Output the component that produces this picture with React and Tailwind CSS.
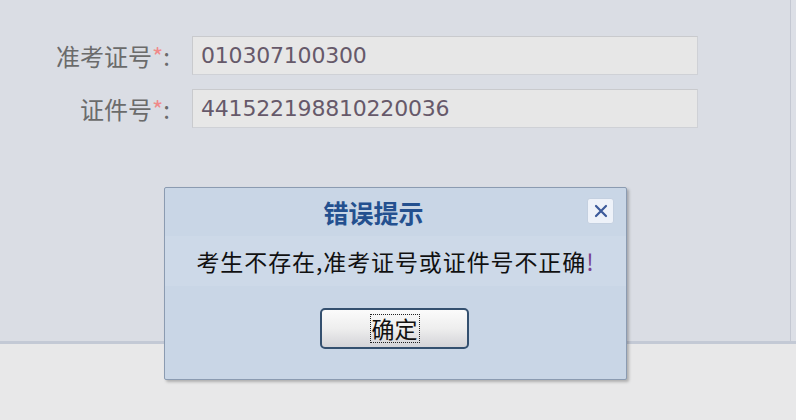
import React from "react";

const fields = [
  { label: "准考证号", value: "010307100300" },
  { label: "证件号", value: "441522198810220036" },
];

function FieldRow({ label, value }) {
  return (
    <div className="flex items-center h-[39px]">
      <div className="w-[176px] pr-[6px] text-right text-[24px] text-[#6b6b6b] leading-none whitespace-nowrap">
        {label}
        <span className="text-[#f08a8a]">*</span>:
      </div>
      <div className="ml-[16px] w-[506px] h-[39px] bg-[#e7e7e7] border-t border-l border-[#c9cacd] border-b border-r border-b-[#cfd1d6] border-r-[#cfd1d6] flex items-center pl-[8px]">
        <span className="text-[22px] text-[#66596a] font-['DejaVu_Sans',sans-serif] tracking-[-0.2px]">{value}</span>
      </div>
    </div>
  );
}

function ErrorDialog() {
  return (
    <div className="absolute left-[164px] top-[187px] w-[463px] h-[193px] bg-[#c9d6e6] border border-[#8b9bb1] rounded-[2px] shadow-[2px_2px_3px_rgba(0,0,0,0.25)] flex flex-col">
      <div className="relative h-[48px] flex items-center justify-center">
        <span className="text-[25px] font-bold text-[#24508f] leading-none -translate-x-[22px]">错误提示</span>
        <button className="absolute right-[12px] top-[10px] w-[27px] h-[26px] rounded-[3px] bg-[#eef2f9] border border-[#c4d0e0] flex items-center justify-center">
          <svg width="16" height="16" viewBox="0 0 16 16">
            <path d="M3 3 L13 13 M13 3 L3 13" stroke="#3c5a9a" strokeWidth="2.2" strokeLinecap="round" />
          </svg>
        </button>
      </div>
      <div className="h-[50px] bg-[#cdd9e8] flex items-center justify-center">
        <span className="text-[23px] text-[#111] tracking-[0.9px] leading-none whitespace-nowrap">
          考生不存在,准考证号或证件号不正确<span className="text-[#7a3f8f]">!</span>
        </span>
      </div>
      <div className="flex-1 flex items-start justify-center pt-[22px]">
        <button className="w-[149px] h-[41px] rounded-[5px] border-2 border-[#34506f] bg-gradient-to-b from-[#fbfbfb] via-[#eeeeee] to-[#d4d4d8] flex items-center justify-center -translate-x-[1px]">
          <span className="text-[23px] text-[#111] leading-none px-[1px] py-[2px] border border-dotted border-[#222]">确定</span>
        </button>
      </div>
    </div>
  );
}

export default function App() {
  return (
    <div className="relative w-[796px] h-[420px] bg-[#e8e8e9] overflow-hidden font-['Noto_Sans_CJK_SC','Noto_Sans',sans-serif]">
      <div className="flex h-[344px] bg-[#dadde4] border-b-[3px] border-[#c3c9d5]">
        <div className="w-[791px] border-r border-[#c4c8d2] pt-[36px] flex flex-col gap-[14px]">
          {fields.map((f) => (
            <FieldRow key={f.label} label={f.label} value={f.value} />
          ))}
        </div>
        <div className="flex-1 bg-[#dcdfe6]" />
      </div>
      <ErrorDialog />
    </div>
  );
}
